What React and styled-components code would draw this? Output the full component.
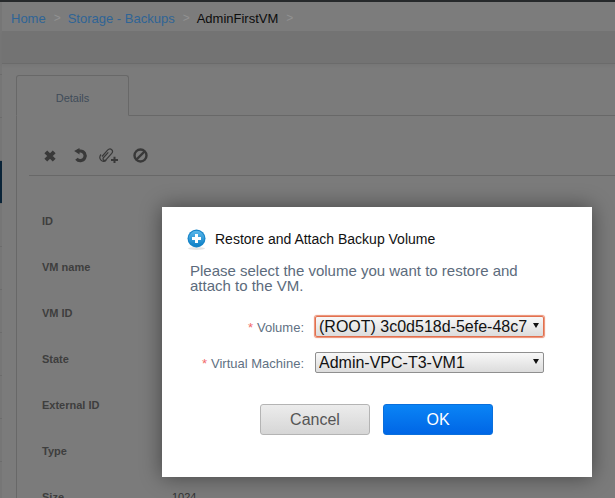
import React from "react";
import styled, { createGlobalStyle } from "styled-components";

const Global = createGlobalStyle`
  html, body { margin: 0; padding: 0; background: #7b7b7b; }
  * { box-sizing: border-box; }
`;

const Page = styled.div`
  position: relative;
  width: 615px;
  height: 498px;
  overflow: hidden;
  display: flex;
  flex-direction: column;
  font-family: "Liberation Sans", Arial, sans-serif;
  background: #7b7b7b;
`;
const TopBar = styled.div`
  height: 2px;
  flex: none;
  background: #26292b;
`;
const Shell = styled.div`
  flex: 1;
  display: flex;
  min-height: 0;
`;
const Sidebar = styled.div`
  width: 2px;
  flex: none;
  padding-top: 30px;
  background: #767676;
`;
const SideItem = styled.div`
  height: 43px;
  border-bottom: 1px solid #6c6c6c;
  background: ${(p) => (p.$active ? "#0a2438" : "transparent")};
`;
const Main = styled.div`
  flex: 1;
  min-width: 0;
  display: flex;
  flex-direction: column;
`;
const Crumbs = styled.div`
  height: 29px;
  flex: none;
  display: flex;
  align-items: center;
  padding: 3px 0 0 9px;
  background: #7c7c7c;
  font-size: 13px;
`;
const CrumbLink = styled.span`
  color: ${(p) => (p.$current ? "#0c0c0c" : "#2f6496")};
`;
const CrumbSep = styled.span`
  color: #929292;
  font-size: 12px;
  margin: 0 7px 0 8px;
`;
const SubBar = styled.div`
  height: 33px;
  flex: none;
  background: #737373;
  border-bottom: 1px solid #6b6b6b;
  box-shadow: 0 2px 3px rgba(0, 0, 0, 0.04);
`;
const Content = styled.div`
  flex: 1;
  min-height: 0;
  padding: 11px 0 0 14px;
`;
const Tabs = styled.div`
  display: flex;
`;
const Tab = styled.div`
  width: 113px;
  height: 41px;
  margin-bottom: -1px;
  padding-top: 5px;
  display: flex;
  align-items: center;
  justify-content: center;
  font-size: 11px;
  color: #3f4c59;
  background: #7b7b7b;
  border: 1px solid #686868;
  border-bottom: 1px solid #7b7b7b;
  border-radius: 3px 3px 0 0;
  position: relative;
`;
const Panel = styled.div`
  border-top: 1px solid #686868;
  border-left: 1px solid #686868;
  padding: 0 0 0 12px;
  height: 500px;
`;
const Toolbar = styled.div`
  height: 60px;
  display: flex;
  align-items: flex-end;
  padding: 0 0 12px 14px;
  border-bottom: 1px solid #686868;
`;
const ToolIcon = styled.svg`
  display: block;
  flex: none;
  color: #393939;
  margin-left: ${(p) => p.$left || 0}px;
`;
const Details = styled.div`
  padding: 39px 0 0 13px;
`;
const DetailRow = styled.div`
  height: 46px;
  display: flex;
  font-size: 11px;
  line-height: 13px;
`;
const DetailLabel = styled.div`
  width: 130px;
  font-weight: bold;
  color: #3e3e3e;
`;
const DetailValue = styled.div`
  color: #333;
`;
const Dialog = styled.div`
  position: absolute;
  left: 162px;
  top: 207px;
  width: 430px;
  height: 270px;
  background: #fff;
  box-shadow: 0 0 20px rgba(0, 0, 0, 0.45);
  padding: 22px 48px 0 26px;
`;
const TitleRow = styled.div`
  display: flex;
  align-items: center;
  gap: 9px;
  height: 20px;
`;
const Badge = styled.svg`
  display: block;
  flex: none;
  margin-left: -1px;
`;
const Title = styled.div`
  font-size: 14px;
  color: #111;
`;
const Message = styled.div`
  margin: 14px 0 0 2px;
  font-size: 15px;
  line-height: 15px;
  color: #5c6b7c;
`;
const Form = styled.div`
  margin-top: 23px;
  display: grid;
  grid-template-columns: 1fr 229px;
  column-gap: 11px;
  row-gap: 15px;
  align-items: center;
`;
const FieldLabel = styled.label`
  text-align: right;
  font-size: 13px;
  color: #5f7183;
  padding-top: 2px;
`;
const Star = styled.span`
  color: #f26a6a;
  margin-right: 4px;
`;
const SelectWrap = styled.div`
  position: relative;
  width: 229px;
  height: 21px;
`;
const Select = styled.select`
  display: block;
  width: 229px;
  height: 21px;
  padding: 0 0 1px 3px;
  margin: 0;
  appearance: none;
  font-family: "Liberation Sans", Arial, sans-serif;
  font-size: 16px;
  color: #111;
  border-radius: 2px;
  border: 1px solid ${(p) => (p.$focus ? "#e2704e" : "#8f8f8f")};
  box-shadow: ${(p) => (p.$focus ? "0 0 1px 1px #ea8d72" : "none")};
  background: linear-gradient(#f8f8f8, #dcdcdc);
  outline: none;
`;
const SelectArrow = styled.span`
  position: absolute;
  right: 5px;
  top: 7px;
  width: 0;
  height: 0;
  border-left: 3px solid transparent;
  border-right: 3px solid transparent;
  border-top: 5px solid #111;
  pointer-events: none;
`;
const Buttons = styled.div`
  margin-top: 31px;
  margin-right: -20px;
  display: flex;
  justify-content: center;
  gap: 13px;
`;
const Button = styled.button`
  width: 110px;
  height: 31px;
  padding: 0 0 0 1px;
  font-family: "Liberation Sans", Arial, sans-serif;
  font-size: 16px;
  border-radius: 3px;
  color: ${(p) => (p.$primary ? "#fff" : "#555")};
  border: 1px solid ${(p) => (p.$primary ? "#0a6fdc" : "#b4b4b4")};
  background: ${(p) =>
    p.$primary
      ? "linear-gradient(#0a84f5, #0066e6)"
      : "linear-gradient(#ececec, #d6d6d6)"};
`;

const CloseIcon = () => (
  <ToolIcon width="14" height="14" viewBox="0 0 14 14">
    <path d="M2.800 2.800l8.400 8.400M11.200 2.800l-8.400 8.400" stroke="currentColor" strokeWidth="4" fill="none" />
  </ToolIcon>
);
const UndoIcon = () => (
  <ToolIcon $left={15} width="16" height="15" viewBox="0 0 16 15">
    <path d="M5.200 3h3.300a4.800 4.800 0 1 1-4 7.700" stroke="currentColor" strokeWidth="3.200" fill="none" />
    <path d="M7.500 0v6.400L2.200 3z" fill="currentColor" />
  </ToolIcon>
);
const AttachIcon = () => (
  <ToolIcon $left={11} width="20" height="16" viewBox="0 0 20 16">
    <path
      d="M3 9.500l5.600-6.300c1.300-1.400 3-1.500 4.100-.5s1 2.600-.2 4L7.100 12.600c-.8.900-1.900 1-2.600.4s-.6-1.700.1-2.500l4.700-5.100M2 7.500C.6 9.200.5 11.500 2 13.200s3.700 1.500 5.300-.2"
      stroke="currentColor"
      strokeWidth="1.200"
      fill="none"
    />
    <path d="M12 13h7M15.500 9.800v6.200" stroke="currentColor" strokeWidth="2" fill="none" />
  </ToolIcon>
);
const BanIcon = () => (
  <ToolIcon $left={14} width="15" height="15" viewBox="0 0 15 15">
    <circle cx="7.500" cy="7.500" r="6" stroke="currentColor" strokeWidth="2.400" fill="none" />
    <path d="M3.500 11.500l8-8" stroke="currentColor" strokeWidth="2.400" />
  </ToolIcon>
);
const PlusBadge = () => (
  <Badge width="19" height="21" viewBox="0 0 19 21">
    <defs>
      <linearGradient id="pb" x1="0" y1="0" x2="0" y2="1">
        <stop offset="0" stopColor="#5cb8ea" />
        <stop offset="1" stopColor="#0c7fc6" />
      </linearGradient>
    </defs>
    <ellipse cx="9.500" cy="19.500" rx="8.500" ry="1.500" fill="#e4e4e4" />
    <circle cx="9.500" cy="9.500" r="9" fill="#1684c8" />
    <circle cx="9.500" cy="9.500" r="7.800" fill="url(#pb)" />
    <path d="M9.500 5v9M5 9.500h9" stroke="#fff" strokeWidth="3" />
  </Badge>
);

const details = [
  ["ID", ""],
  ["VM name", ""],
  ["VM ID", ""],
  ["State", ""],
  ["External ID", ""],
  ["Type", ""],
  ["Size", "1024"],
];

export default function App() {
  return (
    <Page>
      <Global />
      <TopBar />
      <Shell>
        <Sidebar>
          {[0, 1, 2, 3, 4, 5, 6, 7, 8, 9, 10].map((i) => (
            <SideItem key={i} $active={i === 3} />
          ))}
        </Sidebar>
        <Main>
          <Crumbs>
            <CrumbLink>Home</CrumbLink>
            <CrumbSep>&gt;</CrumbSep>
            <CrumbLink>Storage - Backups</CrumbLink>
            <CrumbSep>&gt;</CrumbSep>
            <CrumbLink $current>AdminFirstVM</CrumbLink>
            <CrumbSep>&gt;</CrumbSep>
          </Crumbs>
          <SubBar />
          <Content>
            <Tabs>
              <Tab>Details</Tab>
            </Tabs>
            <Panel>
              <Toolbar>
                <CloseIcon />
                <UndoIcon />
                <AttachIcon />
                <BanIcon />
              </Toolbar>
              <Details>
                {details.map(([label, value]) => (
                  <DetailRow key={label}>
                    <DetailLabel>{label}</DetailLabel>
                    <DetailValue>{value}</DetailValue>
                  </DetailRow>
                ))}
              </Details>
            </Panel>
          </Content>
        </Main>
      </Shell>
      <Dialog>
        <TitleRow>
          <PlusBadge />
          <Title>Restore and Attach Backup Volume</Title>
        </TitleRow>
        <Message>
          Please select the volume you want to restore and
          <br />
          attach to the VM.
        </Message>
        <Form>
          <FieldLabel>
            <Star>*</Star>Volume:
          </FieldLabel>
          <SelectWrap>
            <Select $focus defaultValue="a">
              <option value="a">(ROOT) 3c0d518d-5efe-48c7</option>
            </Select>
            <SelectArrow />
          </SelectWrap>
          <FieldLabel>
            <Star>*</Star>Virtual Machine:
          </FieldLabel>
          <SelectWrap>
            <Select defaultValue="b">
              <option value="b">Admin-VPC-T3-VM1</option>
            </Select>
            <SelectArrow />
          </SelectWrap>
        </Form>
        <Buttons>
          <Button>Cancel</Button>
          <Button $primary>OK</Button>
        </Buttons>
      </Dialog>
    </Page>
  );
}
